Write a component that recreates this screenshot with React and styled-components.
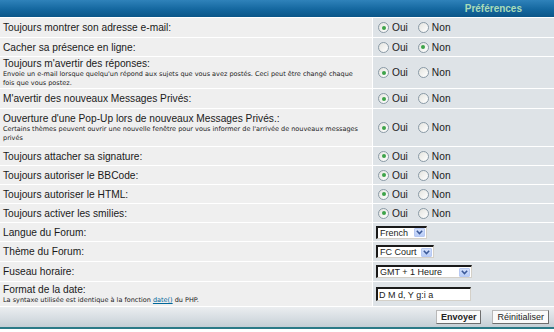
import styled, { createGlobalStyle } from 'styled-components';

const GlobalStyle = createGlobalStyle`
  html, body { margin: 0; padding: 0; background: #ffffff; }
  body { font-family: "Liberation Sans", Arial, sans-serif; color: #1a1a1a; }
`;

const rows = [
  { label: 'Toujours montrer son adresse e-mail:', type: 'radio', value: true, h: 19 },
  { label: 'Cacher sa présence en ligne:', type: 'radio', value: false, h: 18 },
  {
    label: "Toujours m'avertir des réponses:",
    desc: "Envoie un e-mail lorsque quelqu'un répond aux sujets que vous avez postés. Ceci peut être changé chaque fois que vous postez.",
    type: 'radio', value: true, h: 31,
  },
  { label: 'M\'avertir des nouveaux Messages Privés:', type: 'radio', value: true, h: 19 },
  {
    label: "Ouverture d'une Pop-Up lors de nouveaux Messages Privés.:",
    desc: "Certains thèmes peuvent ouvrir une nouvelle fenêtre pour vous informer de l'arrivée de nouveaux messages privés",
    type: 'radio', value: true, h: 37,
  },
  { label: 'Toujours attacher sa signature:', type: 'radio', value: true, h: 18 },
  { label: 'Toujours autoriser le BBCode:', type: 'radio', value: true, h: 18 },
  { label: 'Toujours autoriser le HTML:', type: 'radio', value: true, h: 18 },
  { label: 'Toujours activer les smilies:', type: 'radio', value: true, h: 18 },
  { label: 'Langue du Forum:', type: 'select', value: 'French', w: 51, h: 18 },
  { label: 'Thème du Forum:', type: 'select', value: 'FC Court', w: 58, h: 19 },
  { label: 'Fuseau horaire:', type: 'select', value: 'GMT + 1 Heure', w: 96, h: 19 },
  { label: 'Format de la date:', type: 'date', value: 'D M d, Y g:i a', h: 24 },
];

function Radio({ checked, label }) {
  return (
    <RadioLabel>
      <RadioDot $checked={checked} />
      {label}
    </RadioLabel>
  );
}

function Select({ value, width }) {
  return (
    <SelectBox style={{ width }}>
      <SelectText>{value}</SelectText>
      <SelectArrow>
        <svg width="7" height="5" viewBox="0 0 7 5">
          <path d="M0.8 0.8 L3.5 3.6 L6.2 0.8" fill="none" stroke="#3b5998" strokeWidth="1.5" />
        </svg>
      </SelectArrow>
    </SelectBox>
  );
}

function Control({ row }) {
  if (row.type === 'radio') {
    return (
      <RadioGroup>
        <Radio checked={row.value} label="Oui" />
        <Radio checked={!row.value} label="Non" />
      </RadioGroup>
    );
  }
  if (row.type === 'select') return <Select value={row.value} width={row.w} />;
  return <TextInput>{row.value}</TextInput>;
}

export default function App() {
  return (
    <>
      <GlobalStyle />
      <Table>
        <Head>Préférences</Head>
        {rows.map((row) => (
          <Row key={row.label}>
            <LabelCell $h={row.h}>
              <Label>{row.label}</Label>
              {row.desc && <Desc>{row.desc}</Desc>}
              {row.type === 'date' && (
                <Desc>
                  La syntaxe utilisée est identique à la fonction <DocLink>date()</DocLink> du PHP.
                </Desc>
              )}
            </LabelCell>
            <ControlCell>
              <Control row={row} />
            </ControlCell>
          </Row>
        ))}
        <Footer>
          <Button $main>Envoyer</Button>
          <Button>Réinitialiser</Button>
        </Footer>
      </Table>
    </>
  );
}

const Table = styled.div`
  display: flex;
  flex-direction: column;
  gap: 1px;
  width: 554px;
  background: #ffffff;
  border-bottom: 2px solid #2b7a87;
`;

const Head = styled.div`
  height: 17px;
  display: flex;
  align-items: center;
  justify-content: flex-end;
  padding-right: 32px;
  background: linear-gradient(#2f82ba, #14679f 55%, #0b5688);
  color: #a9dcb8;
  font-weight: bold;
  font-size: 10px;
`;

const Row = styled.div`
  display: grid;
  grid-template-columns: 372px 1fr;
  column-gap: 1px;
`;

const LabelCell = styled.div`
  min-height: ${(p) => p.$h}px;
  box-sizing: border-box;
  display: flex;
  flex-direction: column;
  justify-content: center;
  padding: 1px 10px 0 3px;
  background: #efefef;
`;

const Label = styled.div`
  font-size: 10.2px;
  line-height: 12px;
`;

const Desc = styled.div`
  font-family: "DejaVu Sans", Verdana, sans-serif;
  font-size: 6.5px;
  line-height: 9px;
  color: #222;
`;

const DocLink = styled.span`
  color: #006699;
  text-decoration: underline;
`;

const ControlCell = styled.div`
  display: flex;
  align-items: center;
  padding-left: 3px;
  background: #dee3e7;
`;

const RadioGroup = styled.div`
  display: flex;
  align-items: center;
  gap: 10px;
  padding-left: 2px;
`;

const RadioLabel = styled.span`
  display: flex;
  align-items: center;
  gap: 3px;
  font-size: 10.2px;
  color: #222;
`;

const RadioDot = styled.span`
  position: relative;
  width: 9px;
  height: 9px;
  border: 1px solid #8a9aa6;
  border-radius: 50%;
  background: linear-gradient(135deg, #e4e4df, #ffffff);
  &::after {
    content: '';
    display: ${(p) => (p.$checked ? 'block' : 'none')};
    position: absolute;
    left: 2.5px;
    top: 2.5px;
    width: 4px;
    height: 4px;
    border-radius: 50%;
    background: #3da349;
  }
`;

const SelectBox = styled.div`
  height: 13px;
  box-sizing: border-box;
  display: flex;
  align-items: center;
  justify-content: space-between;
  background: #ffffff;
  border-top: 2px solid #1a1a1a;
  border-left: 2px solid #1a1a1a;
  border-right: 1px solid #d4d0c8;
  border-bottom: 1px solid #d4d0c8;
`;

const SelectText = styled.span`
  padding-left: 2px;
  font-size: 9px;
  color: #222;
  white-space: nowrap;
`;

const SelectArrow = styled.span`
  width: 11px;
  height: 9px;
  display: flex;
  align-items: center;
  justify-content: center;
  margin-right: 1px;
  background: linear-gradient(#d4e0fb, #b9cdf7);
  border: 1px solid #b7c9f3;
  border-radius: 1px;
  box-sizing: border-box;
`;

const TextInput = styled.div`
  width: 95px;
  height: 14px;
  box-sizing: border-box;
  display: flex;
  align-items: center;
  padding-left: 1px;
  background: #ffffff;
  border-top: 2px solid #1a1a1a;
  border-left: 2px solid #1a1a1a;
  border-right: 1px solid #d4d0c8;
  border-bottom: 1px solid #d4d0c8;
  font-size: 9px;
  color: #222;
  white-space: nowrap;
`;

const Footer = styled.div`
  height: 20px;
  display: flex;
  align-items: center;
  justify-content: flex-end;
  gap: 11px;
  padding-right: 5px;
  background: linear-gradient(#ebeef0, #d5dce1 60%, #c4ced5);
`;

const Button = styled.button`
  height: 14px;
  padding: 0 4px;
  display: flex;
  align-items: center;
  font-family: "Liberation Sans", Arial, sans-serif;
  font-size: 9px;
  font-weight: ${(p) => (p.$main ? 'bold' : 'normal')};
  color: #222;
  background: #fafafa;
  border: 1px solid #b8b8b8;
  border-right-color: #6e6e6e;
  border-bottom-color: #6e6e6e;
  border-radius: 0;
`;
